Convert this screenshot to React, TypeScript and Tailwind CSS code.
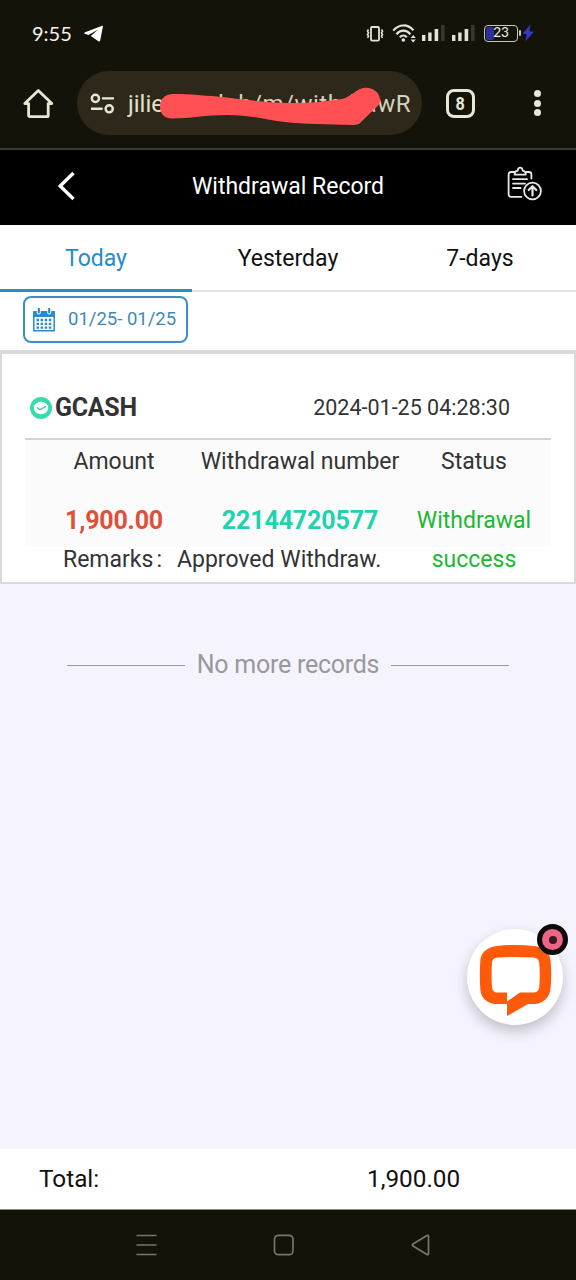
import type { ReactNode } from "react";

type RecordItem = {
  id: string;
  method: string;
  createdAt: string;
  amount: string;
  status: string;
  remarks: string;
};

const tabs = ["Today", "Yesterday", "7-days"];

const records: RecordItem[] = [
  {
    id: "22144720577",
    method: "GCASH",
    createdAt: "2024-01-25 04:28:30",
    amount: "1,900.00",
    status: "Withdrawal success",
    remarks: "Approved Withdraw.",
  },
];

function SignalIcon() {
  return (
    <svg width="24" height="18" viewBox="0 0 24 18" fill="#e4e3da">
      <rect x="0" y="11" width="3.4" height="6" />
      <rect x="6.2" y="8.5" width="3.4" height="8.5" />
      <rect x="12.6" y="5" width="3.6" height="12" />
      <rect x="19" y="1" width="3.6" height="16" fill="#38372c" />
    </svg>
  );
}

function StatusBar() {
  return (
    <div className="flex h-[66px] items-center pl-8 text-[#f4f3ea]">
      <span className="w-[52px] font-[Lato] text-[20px] leading-6">9:55</span>
      <svg className="mt-px" width="20" height="18" viewBox="0 0 20 18" fill="#fff">
        <path d="M19 1.2 16.2 15.6c-.2 1-1 1.2-1.8.7L6.8 11 14 4.4 4.6 10 .9 8.8c-1-.3-1-1 .2-1.5L17.6.9c.8-.3 1.5.2 1.4.3z" />
      </svg>

      <svg className="mt-px ml-[262px]" width="18" height="18" viewBox="0 0 18 18" fill="none" stroke="#e4e3da">
        <rect x="5" y="2" width="8" height="13.6" rx="1.2" strokeWidth="1.8" />
        <path d="M2.5 4.5l-1 1.7 1 1.6-1 1.7 1 1.6-1 1.7M15.5 4.5l1 1.7-1 1.6 1 1.7-1 1.6 1 1.7" strokeWidth="1.6" />
      </svg>
      <svg className="mt-0.5 ml-2" width="25" height="20" viewBox="0 0 25 20" fill="none" stroke="#e4e3da" strokeWidth="2.2">
        <path d="M1.2 6.6C7-.2 15.8-.2 21.4 6.4M4.4 10.2c4-4.7 10-4.7 14 0M7.8 13.2c2.2-2.3 5-2.3 7 0" />
        <circle cx="11.3" cy="16" r="1.8" fill="#e4e3da" stroke="none" />
        <path d="M18.6 14l2.6-3 2.6 3zM18.6 15.4h5.2l-2.6 3z" fill="#e4e3da" stroke="none" />
      </svg>
      <div className="ml-[5px] flex gap-1.5">
        <SignalIcon />
        <SignalIcon />
      </div>
      <div className="relative ml-2 flex h-[17px] w-[34px] shrink-0 items-center justify-center rounded-[4px] border-[1.5px] border-[#c9c8bd]">
        <div className="absolute top-px bottom-px left-px w-[8px] rounded-[2px] bg-[#2b2f9c]" />
        <span className="relative font-[Lato] text-[13.5px] leading-none">23</span>
        <div className="absolute top-[4px] -right-[4px] h-[6px] w-[2px] rounded-sm bg-[#c9c8bd]" />
      </div>
      <svg className="ml-[4px]" width="13" height="18" viewBox="0 0 13 18" fill="#3438c4">
        <path d="M8.2.5.8 9.4l4 1-1.4 6.8L11.8 8 7.4 7z" />
      </svg>
    </div>
  );
}

function BrowserBar() {
  return (
    <div className="flex h-[84px] items-start border-b-2 border-[#3a3a35] pt-[5px] pl-[23px]">
      <svg className="mt-[17px]" width="31" height="32" viewBox="0 0 31 32" fill="none" stroke="#e8e6d6" strokeWidth="2.8" strokeLinejoin="round">
        <path d="M1.8 15.6 15.3 2.4l13.5 13.2h-3.6v11.9a1.2 1.2 0 0 1-1.2 1.2H6.8a1.2 1.2 0 0 1-1.2-1.2V15.6z" />
      </svg>

      <div className="relative ml-[23px] flex h-16 w-[345px] items-center rounded-full bg-[#2d2819] pl-[13px]">
        <svg className="mt-px" width="26" height="22" viewBox="0 0 26 22" fill="none" stroke="#e8e6d6" strokeWidth="2.4">
          <circle cx="5.4" cy="5.4" r="3.6" />
          <circle cx="19.2" cy="15.8" r="3.6" />
          <path d="M12 5.4h12M1 15.8h11.6" />
        </svg>
        <div className="ml-[12px] flex w-[283px] justify-between pt-0.5 text-[24px] leading-8 text-[#d6d2be]">
          <span className="text-[#e4e0ce]">jilie</span>
          <span className="tracking-[0.5px]">lub/m/withdrawR</span>
        </div>
        {/* marker stroke hiding the host name */}
        <svg className="absolute top-[15px] left-[82px]" width="226" height="42" viewBox="0 0 226 42" fill="#ff5153">
          <path d="M13 8C25 7.500 40 9 58 10.500c22 2.500 44 5.500 70 6.500 22 .5 38-1.500 55-4 7-2 11-6 17-9.500 10-5 22 1.500 21 12-.3 2.500-1.500 4-4 6L203 35c-2.500 3-5 4-9 4-25-.5-50-1-68-3-19-2-33-7-58-7-20 0-38 3.500-55 3.500C5 32.500 1 27 1 20.500 1 14 5 8.500 13 8z" />
        </svg>
      </div>

      <div className="mt-[18px] ml-6 flex size-[29px] items-center justify-center rounded-[8px] border-[3px] border-[#e8e6d6] font-[Roboto] text-[18px] leading-none font-bold text-[#e8e6d6]">
        <span className="scale-x-90">8</span>
      </div>
      <div className="mt-[19px] ml-[59px] flex flex-col gap-[2.500px]">
        <span className="size-[7px] rounded-full bg-[#e8e6d6]" />
        <span className="size-[7px] rounded-full bg-[#e8e6d6]" />
        <span className="size-[7px] rounded-full bg-[#e8e6d6]" />
      </div>
    </div>
  );
}

function PageHeader() {
  return (
    <header className="flex h-[75px] items-center bg-black text-white">
      <button className="w-24 pb-1 pl-[57px]">
        <svg width="20" height="30" viewBox="0 0 20 30" fill="none" stroke="#fff" strokeWidth="3.4">
          <path d="M16.5 2 3.2 15l13.3 13" />
        </svg>
      </button>
      <h1 className="flex-1 pb-px text-center text-[23px] leading-8">Withdrawal Record</h1>
      <button className="w-24 pb-2 pl-[26px]">
        <svg width="38" height="36" viewBox="0 0 38 36" fill="none" stroke="#e9e9e9" strokeWidth="1.8" strokeLinecap="round" strokeLinejoin="round">
          <path d="M8.500 6H5a2.400 2.400 0 0 0-2.400 2.400v20A2.400 2.400 0 0 0 5 30.800h10.500M20 6h3a2.400 2.400 0 0 1 2.400 2.400V12.500" />
          <path d="M8.600 8.600c0-2.500 1.200-3.800 3-3.800.3-2.200 1.200-3.200 2.600-3.200s2.300 1 2.600 3.200c1.800 0 3 1.300 3 3.800z" />
          <path d="M7 13.200h14M7 17.600h12M7 22h7.500" />
          <circle cx="26.500" cy="25" r="8.400" />
          <path d="M26.500 29.500v-9M22.700 24l3.800-3.800 3.800 3.800" strokeWidth="2.200" />
        </svg>
      </button>
    </header>
  );
}

function CalendarIcon() {
  return (
    <svg width="22" height="24" viewBox="0 0 22 24" fill="none">
      <path d="M0 3h22v6H0z" fill="#2b8aca" />
      <path d="M.8 8v14.700h20.400V8" stroke="#2b8aca" strokeWidth="1.500" />
      <path d="M3.800 0h4v4.500a2 2 0 0 1-4 0zM14.200 0h4v4.500a2 2 0 0 1-4 0z" fill="#fff" />
      <path d="M5.800 1v3.500M16.200 1v3.500" stroke="#2b8aca" strokeWidth="2.200" strokeLinecap="round" />
      <path d="M3.500 12h15M3.500 15.800h15M3.500 19.600h15" stroke="#2b8aca" strokeWidth="2.300" strokeDasharray="2.500 1.600" />
    </svg>
  );
}

function Cell({ label, children }: { label: string; children: ReactNode }) {
  return (
    <div className="flex flex-col items-center whitespace-nowrap">
      <span className="pt-px leading-[42px]">{label}</span>
      <div className="mt-[19px] text-center leading-[38.500px]">{children}</div>
    </div>
  );
}

function RecordCard({ record }: { record: RecordItem }) {
  return (
    <article className="h-[234px] border-x-2 border-t-4 border-b-2 border-[#dadada] bg-white px-[23px] text-[23px] text-[#333]">
      <div className="flex h-[86px] items-end justify-between border-b-2 border-[#d4d4d4] pr-[41px] pb-[14px] pl-[5px]">
        <div className="flex items-center gap-[3px] leading-8">
          <svg width="22" height="22" viewBox="0 0 22 22" fill="none">
            <circle cx="11" cy="11" r="11" fill="#35dcae" />
            <ellipse cx="11" cy="11" rx="7.200" ry="6.200" fill="#fff" />
            <path d="M7 10.500l3 2.200 5.800-3.600" stroke="#35c9a2" strokeWidth="1.300" />
          </svg>
          <b className="text-[25px] font-bold tracking-[-0.3px]">{record.method}</b>
        </div>
        <span className="text-[21.500px] leading-8">{record.createdAt}</span>
      </div>

      <div className="grid h-[107px] grid-cols-[178px_194px_154px] bg-[#fbfbfb]">
        <Cell label="Amount">
          <b className="text-[25px] font-bold tracking-[-0.200px] text-[#e04f38]">{record.amount}</b>
        </Cell>
        <Cell label="Withdrawal number">
          <b className="text-[25px] font-bold tracking-[-0.100px] text-[#1fd2b0]">{record.id}</b>
        </Cell>
        <Cell label="Status">
          <p className="w-[130px] whitespace-normal text-[#1db832]">{record.status}</p>
        </Cell>
      </div>

      <div className="flex h-[27px] items-center pl-[38px]">
        <span className="w-[114px]">Remarks<span className="ml-[3px]">:</span></span>
        <span>{record.remarks}</span>
      </div>
    </article>
  );
}

function ChatButton() {
  return (
    <button className="absolute top-[929px] left-[467px] size-24 rounded-full bg-white shadow-[0_6px_14px_rgba(0,0,0,0.22)]">
      <svg width="96" height="96" viewBox="0 0 96 96">
        <path
          fill="#fe5a0a"
          fillRule="evenodd"
          d="M30 17c12-1.500 24-1.500 37 0 9 1 16 6 16.600 15 .8 9 .8 18 0 27C83 68 77 74 68 75h-7L40 87V75H28c-8-1-14-6-14.600-14-.8-10-.8-20 0-30C14 23 21 18 30 17zM31 28.500c-4 .3-6 2-6 6-.6 8-.6 15 0 23 .2 4 2 6 6 6h9v9l13-9h13c4 0 6-2 6.300-6 .6-8 .6-15 0-23-.3-4-2-5.700-6-6-12-.8-23-.8-35.300 0z"
        />
      </svg>
      <span className="absolute -top-[5px] left-[70px] flex size-[31px] items-center justify-center rounded-full border-[5px] border-[#0d0a0c] bg-[#ee6487]">
        <span className="size-2 rounded-full bg-[#3b1721]" />
      </span>
    </button>
  );
}

export default function App() {
  return (
    <div className="relative flex h-[1280px] w-[576px] flex-col overflow-hidden bg-[#14130a] font-[Roboto,sans-serif]">
      <StatusBar />
      <BrowserBar />
      <PageHeader />

      <main className="flex flex-1 flex-col bg-[#f5f4fe]">
        <nav className="grid h-[67px] grid-cols-3 bg-white">
          {tabs.map((tab, i) => (
            <button
              key={tab}
              className={
                i === 0
                  ? "border-b-[3px] border-[#2b8aca] pt-[5px] text-[23px] text-[#2b8aca]"
                  : "border-b-2 border-[#e4e4e4] pt-[4px] text-[23px] text-[#111]"
              }
            >
              {tab}
            </button>
          ))}
        </nav>

        <div className="h-[58px] bg-white pt-[4px] pl-[23px]">
          <button className="flex h-[47px] w-[165px] items-center rounded-[8px] border-2 border-[#3a90c8] pl-[8px] text-[#3f88b8]">
            <CalendarIcon />
            <span className="ml-[13px] text-[18.500px]">01/25- 01/25</span>
          </button>
        </div>

        {records.map((record) => (
          <RecordCard key={record.id} record={record} />
        ))}

        <div className="mt-[65px] flex items-center justify-center gap-[12px] text-[25px] leading-8 tracking-[-0.250px] text-[#999]">
          <span className="mt-px h-[1.500px] w-[118px] bg-[#999]" />
          No more records
          <span className="mt-px h-[1.500px] w-[118px] bg-[#999]" />
        </div>

        <footer className="mt-auto flex h-[61px] items-center border-b border-[#8c8c80] bg-white pl-[39px] text-[24.300px] text-[#111]">
          <span className="w-[328px]">Total:</span>
          <span>1,900.00</span>
        </footer>
      </main>

      <div className="flex h-[70px] items-center pl-[135px]">
        <svg width="300" height="24" viewBox="0 0 300 24" fill="none" stroke="#77766b" strokeWidth="1.700">
          <path d="M1.500 2.500h20M1.500 12h20M1.500 21.500h20" />
          <rect x="139.500" y="2.300" width="18.500" height="19.400" rx="4" />
          <path d="M293.500 3.300v17.400c0 1-.8 1.200-1.500.8l-14-8.400c-.9-.6-.9-1.600 0-2.200l14-8.400c.7-.4 1.500-.2 1.500.8z" />
        </svg>
      </div>

      <ChatButton />
    </div>
  );
}
